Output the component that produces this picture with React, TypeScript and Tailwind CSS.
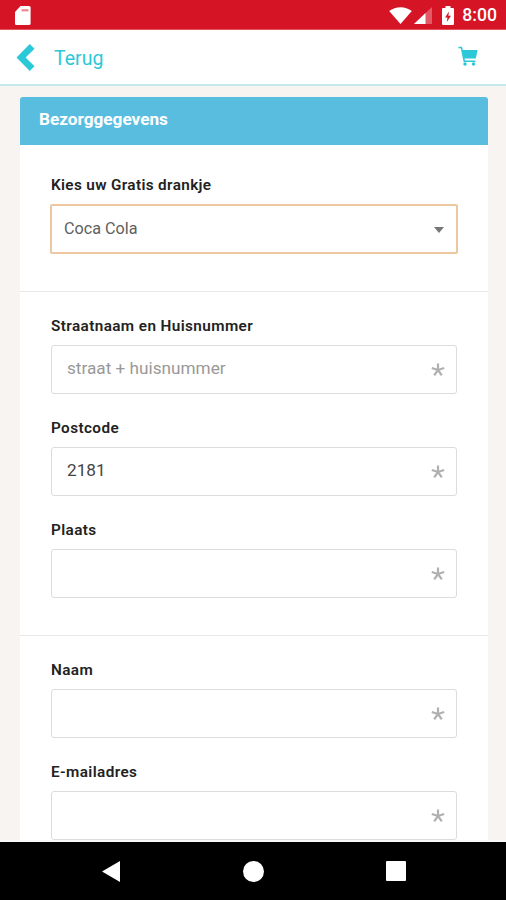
import { clsx } from 'clsx';

interface FieldProps {
  label: string;
  placeholder?: string;
  value?: string;
  className?: string;
}

function StatusBar() {
  return (
    <div className="flex h-[30px] shrink-0 items-center justify-between border-b border-[#e2545e] bg-[#d51425] pl-[15px] pr-[9px] text-white">
      <svg className="mt-0.5" width="16" height="19" viewBox="0 0 16 19" fill="currentColor">
        <path d="M5.5 0H14a1.6 1.6 0 0 1 1.6 1.6v15.8A1.6 1.6 0 0 1 14 19H1.6A1.6 1.6 0 0 1 0 17.4V6z" />
        <path d="M6.5 3.2h7v2.2h-7z" fill="#ea8a92" />
      </svg>
      <div className="flex items-center pt-0.5">
        <svg width="23" height="17" viewBox="0 0 24 18" fill="currentColor">
          <path d="M0 4.2C7-1.2 17-1.2 24 4.2L12 18z" />
        </svg>
        <svg className="ml-0.5" width="18" height="17" viewBox="0 0 18 17" fill="currentColor">
          <path d="M18 0v17H0z" opacity="0.3" />
          <path d="M11.5 6v11H0z" />
        </svg>
        <svg className="ml-2.5" width="12" height="19" viewBox="0 0 12 19">
          <path
            d="M3.5 0h5v2H11a1 1 0 0 1 1 1v15a1 1 0 0 1-1 1H1a1 1 0 0 1-1-1V3a1 1 0 0 1 1-1h2.5z"
            fill="currentColor"
          />
          <path d="M7 5.5 3 11.4h2.5L4.8 16 9 9.7H6.4z" fill="#d51425" />
        </svg>
        <span className="ml-2 text-[17.6px] font-medium leading-none">8:00</span>
      </div>
    </div>
  );
}

function Header() {
  return (
    <div className="flex h-14 shrink-0 items-center justify-between border-b-2 border-[#c5eaec] bg-white pl-4 pr-[27px] text-[#2bc8d8]">
      <div className="flex items-center">
        <svg width="19" height="27" viewBox="0 0 19 27" fill="currentColor">
          <path d="M13.8 0 0.5 13.5 13.8 27 18.5 22.3 9.6 13.5 18.5 4.7z" />
        </svg>
        <span className="ml-[19px] mt-[3px] text-[19.5px] leading-none">Terug</span>
      </div>
      <svg className="-mt-[3px]" width="21" height="20" viewBox="0 0 21 20" fill="none">
        <path d="M0.5 1.5h2.9L6.3 15.2h11.2" stroke="currentColor" strokeWidth="1.6" />
        <path d="M4 4h15.6l-1.8 8.5H5.800z" fill="currentColor" />
        <circle cx="7" cy="18" r="1.7" fill="currentColor" />
        <circle cx="15.5" cy="18" r="1.7" fill="currentColor" />
      </svg>
    </div>
  );
}

function RequiredMark() {
  return (
    <svg width="14" height="14" viewBox="0 0 14 14" fill="none" stroke="#b0b0b0" strokeWidth="2.2">
      <path d="M7 7V0.5M7 7 0.8 5M7 7l6.2-2M7 7 3.2 12.3M7 7 10.8 12.3" />
    </svg>
  );
}

function Field({ label, placeholder, value, className }: FieldProps) {
  return (
    <label className={clsx('flex flex-col', className)}>
      <span className="mb-[9px] h-5 text-[15.3px] font-semibold leading-5 tracking-[0.4px] text-[#222]">
        {label}
      </span>
      <span className="flex h-[49px] items-center justify-between rounded-[3px] border border-[#dcdcdc] bg-white pl-[15px] pr-[11px]">
        <span className={clsx('-mt-0.5 text-[17.2px] leading-none', value ? 'text-[#454545]' : 'text-[#999]')}>
          {value || placeholder}
        </span>
        <RequiredMark />
      </span>
    </label>
  );
}

function NavBar() {
  return (
    <div className="flex h-[58px] shrink-0 items-center justify-between bg-black pl-[102px] pr-[100px]">
      <svg width="18" height="21" viewBox="0 0 18 21" fill="white">
        <path d="M18 0v21L0 10.5z" />
      </svg>
      <div className="size-[21px] rounded-full bg-white" />
      <div className="size-5 rounded-[1px] bg-white" />
    </div>
  );
}

export default function App() {
  return (
    <div className="flex h-[900px] w-[506px] flex-col overflow-hidden bg-[#f7f4f1] font-['Roboto',sans-serif]">
      <StatusBar />
      <Header />
      <main className="min-h-0 flex-1 overflow-hidden border-b-2 border-[#f8f8f8] pl-5 pr-[18px] pt-[11px]">
        <section className="overflow-hidden rounded-t-[3px] bg-white">
          <h1 className="flex h-12 items-center bg-[#59bde0] px-[19px] pb-0.5 text-[17.2px] font-bold text-white">
            Bezorggegevens
          </h1>

          <div className="flex flex-col px-[30px] pb-[37px] pt-[30px]">
            <span className="mb-[9px] h-5 pl-px text-[15.3px] font-semibold leading-5 tracking-[0.35px] text-[#222]">
              Kies uw Gratis drankje
            </span>
            <div className="flex h-[50px] items-center justify-between rounded-[2px] border-2 border-[#edc79f] px-3 text-[16.2px] text-[#606060]">
              <span className="leading-none">Coca Cola</span>
              <svg className="mt-0.5" width="10" height="6" viewBox="0 0 10 6" fill="#777">
                <path d="M0 0h10L5 6z" />
              </svg>
            </div>
          </div>

          <div className="flex flex-col gap-6 border-t border-[#e8e8e8] pb-[37px] pl-[31px] pr-[31px] pt-6">
            <Field label="Straatnaam en Huisnummer" placeholder="straat + huisnummer" />
            <Field label="Postcode" value="2181" />
            <Field label="Plaats" />
          </div>

          <div className="flex flex-col gap-6 border-t border-[#e8e8e8] pl-[31px] pr-[31px] pt-6">
            <Field label="Naam" />
            <Field label="E-mailadres" />
          </div>
        </section>
      </main>
      <NavBar />
    </div>
  );
}
